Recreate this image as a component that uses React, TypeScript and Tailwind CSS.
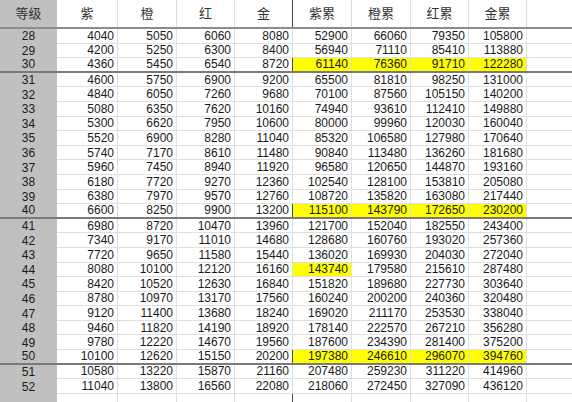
import React from "react";

const HEADERS = ["等级", "紫", "橙", "红", "金", "紫累", "橙累", "红累", "金累"];

// level, then 紫 橙 红 金 and the running totals
const ROWS: number[][] = [
  [28, 4040, 5050, 6060, 8080, 52900, 66060, 79350, 105800],
  [29, 4200, 5250, 6300, 8400, 56940, 71110, 85410, 113880],
  [30, 4360, 5450, 6540, 8720, 61140, 76360, 91710, 122280],
  [31, 4600, 5750, 6900, 9200, 65500, 81810, 98250, 131000],
  [32, 4840, 6050, 7260, 9680, 70100, 87560, 105150, 140200],
  [33, 5080, 6350, 7620, 10160, 74940, 93610, 112410, 149880],
  [34, 5300, 6620, 7950, 10600, 80000, 99960, 120030, 160040],
  [35, 5520, 6900, 8280, 11040, 85320, 106580, 127980, 170640],
  [36, 5740, 7170, 8610, 11480, 90840, 113480, 136260, 181680],
  [37, 5960, 7450, 8940, 11920, 96580, 120650, 144870, 193160],
  [38, 6180, 7720, 9270, 12360, 102540, 128100, 153810, 205080],
  [39, 6380, 7970, 9570, 12760, 108720, 135820, 163080, 217440],
  [40, 6600, 8250, 9900, 13200, 115100, 143790, 172650, 230200],
  [41, 6980, 8720, 10470, 13960, 121700, 152040, 182550, 243400],
  [42, 7340, 9170, 11010, 14680, 128680, 160760, 193020, 257360],
  [43, 7720, 9650, 11580, 15440, 136020, 169930, 204030, 272040],
  [44, 8080, 10100, 12120, 16160, 143740, 179580, 215610, 287480],
  [45, 8420, 10520, 12630, 16840, 151820, 189680, 227730, 303640],
  [46, 8780, 10970, 13170, 17560, 160240, 200200, 240360, 320480],
  [47, 9120, 11400, 13680, 18240, 169020, 211170, 253530, 338040],
  [48, 9460, 11820, 14190, 18920, 178140, 222570, 267210, 356280],
  [49, 9780, 12220, 14670, 19560, 187600, 234390, 281400, 375200],
  [50, 10100, 12620, 15150, 20200, 197380, 246610, 296070, 394760],
  [51, 10580, 13220, 15870, 21160, 207480, 259230, 311220, 414960],
  [52, 11040, 13800, 16560, 22080, 218060, 272450, 327090, 436120],
];

const COLS = "grid grid-cols-[57px_61px_59px_58px_58px_59px_59px_58px_58px_1fr]";

function isYellow(level: number, col: number) {
  if (col < 5) return false;
  if (level === 30 || level === 40 || level === 50) return true;
  return level === 44 && col === 5;
}

export default function App() {
  return (
    <div
      className="w-[572px] h-[402px] overflow-hidden bg-white text-[#1a1a1a] flex flex-col"
      style={{ fontFamily: '"Liberation Sans", "Noto Sans CJK SC", sans-serif' }}
    >
      {/* header */}
      <div className={`${COLS} h-[29px] shrink-0 border-b-2 border-[#8c8c8c] text-[13px] text-[#333]`}>
        {HEADERS.map((h, i) => (
          <div
            key={h}
            className={`flex items-center justify-center ${
              i === 0 ? "bg-[#c0c0c0]" : i === 4 ? "border-r border-[#4a4a4a]" : "border-r border-[#dcdcdc]"
            }`}
          >
            {h}
          </div>
        ))}
        <div />
      </div>

      {ROWS.map((r) => {
        const level = r[0];
        const thick = level === 30 || level === 40 || level === 50;
        return (
          <div
            key={level}
            className={`${COLS} h-[14.6px] shrink-0 text-[12px] leading-none ${
              thick ? "border-b-2 border-[#7a7a7a]" : ""
            }`}
          >
            {r.map((v, c) => (
              <div
                key={c}
                className={`flex items-center ${
                  c === 0
                    ? "justify-center bg-[#c0c0c0]"
                    : `justify-end pr-[3px] ${thick ? "" : "border-b border-[#e0e0e0]"} ${
                        c === 4 ? "border-r border-[#4a4a4a]" : "border-r border-[#dcdcdc]"
                      } ${isYellow(level, c) ? "bg-[#ffff00]" : ""}`
                }`}
              >
                {v}
              </div>
            ))}
            <div className={thick ? "" : "border-b border-[#e0e0e0]"} />
          </div>
        );
      })}

      {/* remaining blank row */}
      <div className={`${COLS} flex-1`}>
        <div className="bg-[#c0c0c0]" />
        {[1, 2, 3, 4, 5, 6, 7, 8].map((c) => (
          <div key={c} className={c === 4 ? "border-r border-[#4a4a4a]" : "border-r border-[#dcdcdc]"} />
        ))}
        <div />
      </div>
    </div>
  );
}
